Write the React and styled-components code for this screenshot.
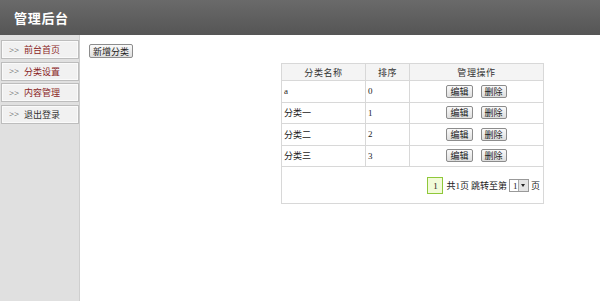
import React from "react";
import styled, { createGlobalStyle } from "styled-components";

const GlobalStyle = createGlobalStyle`
	html, body {
		margin: 0;
		padding: 0;
		background: #fff;
		font-family: "Liberation Serif", "Noto Sans CJK SC", sans-serif;
		font-size: 9px;
		color: #333;
	}
`;

const menu = [
	{ name: "前台首页", red: true },
	{ name: "分类设置", red: true },
	{ name: "内容管理", red: true },
	{ name: "退出登录", red: false },
];

const rows = [
	{ name: "a", sort: "0" },
	{ name: "分类一", sort: "1" },
	{ name: "分类二", sort: "2" },
	{ name: "分类三", sort: "3" },
];

function App() {
	return (
		<Page>
			<GlobalStyle />
			<Header>
				<h1>管理后台</h1>
			</Header>
			<Body>
				<Sidebar>
					{menu.map((m) => (
						<MenuItem key={m.name} $red={m.red}>
							<span className="arrow">&gt;&gt;</span>
							<span className="label">{m.name}</span>
						</MenuItem>
					))}
				</Sidebar>
				<Main>
					<Button>新增分类</Button>
					<Table>
						<thead>
							<tr>
								<th style={{ width: 83 }}>分类名称</th>
								<th style={{ width: 43 }}>排序</th>
								<th>管理操作</th>
							</tr>
						</thead>
						<tbody>
							{rows.map((r) => (
								<tr key={r.name}>
									<td>{r.name}</td>
									<td>{r.sort}</td>
									<td className="ops">
										<Button $small>编辑</Button>
										<Button $small>删除</Button>
									</td>
								</tr>
							))}
							<tr>
								<td colSpan={3} className="pager-cell">
									<Pager>
										<PageNum>1</PageNum>
										<span>共1页</span>
										<span>跳转至第</span>
										<Select>
											<span>1</span>
											<i />
										</Select>
										<span>页</span>
									</Pager>
								</td>
							</tr>
						</tbody>
					</Table>
				</Main>
			</Body>
		</Page>
	);
}

const Page = styled.div`
	width: 600px;
	height: 301px;
	display: flex;
	flex-direction: column;
	overflow: hidden;
`;

const Header = styled.header`
	height: 35px;
	flex-shrink: 0;
	background: linear-gradient(#6a6a6a, #555);
	display: flex;
	align-items: center;
	padding-left: 14px;

	h1 {
		margin: 0;
		font-family: "Noto Sans CJK SC", sans-serif;
		font-size: 13px;
		font-weight: bold;
		color: #fff;
		letter-spacing: 0.7px;
	}
`;

const Body = styled.div`
	flex: 1;
	display: flex;
`;

const Sidebar = styled.nav`
	width: 80px;
	background: #e0e0e0;
	border-right: 1px solid #cfcfcf;
	padding: 5px 0 0 1px;
	box-sizing: border-box;
	display: flex;
	flex-direction: column;
	gap: 2.5px;
`;

const MenuItem = styled.div`
	height: 19px;
	width: 78px;
	box-sizing: border-box;
	background: #f1f1f1;
	border: 1px solid #bdbdbd;
	box-shadow: inset 0 0 0 1px #fafafa;
	display: flex;
	align-items: center;
	padding-left: 7px;

	.arrow {
		color: #444;
		width: 15px;
	}
	.label {
		font-family: "Noto Sans CJK SC", sans-serif;
		color: ${(p) => (p.$red ? "#8a1f1f" : "#333")};
	}
`;

const Main = styled.main`
	flex: 1;
	padding: 9px 56px 0 9px;
	display: flex;
	flex-direction: column;
	align-items: flex-start;
`;

const Button = styled.button`
	font-family: "Noto Sans CJK SC", sans-serif;
	font-size: 9px;
	line-height: 11px;
	color: #222;
	padding: 0 3px;
	height: ${(p) => (p.$small ? "13px" : "14px")};
	background: linear-gradient(#fafafa, #dedede);
	border: 1px solid #8c8c8c;
	border-radius: 2px;
	margin: 0 ${(p) => (p.$small ? "4px" : "0")};
	cursor: pointer;
`;

const Table = styled.table`
	align-self: flex-end;
	margin-top: 5px;
	width: 263px;
	border-collapse: collapse;
	border: 1px solid #d8d8d8;
	font-size: 9px;

	th {
		height: 16px;
		background: #f4f4f4;
		font-family: "Noto Sans CJK SC", sans-serif;
		font-weight: normal;
		color: #333;
		border: 1px solid #d8d8d8;
		padding: 0;
		letter-spacing: 0.6px;
	}
	td {
		height: 20.5px;
		border: 1px solid #d8d8d8;
		padding: 0 2px;
		color: #222;
		font-family: "Liberation Serif", "Noto Sans CJK SC", serif;
	}
	td.ops {
		text-align: center;
	}
	td.pager-cell {
		height: 36px;
		padding: 0;
		vertical-align: bottom;
	}
`;

const Pager = styled.div`
	display: flex;
	justify-content: flex-end;
	align-items: center;
	gap: 2px;
	padding: 0 3px 9px 0;
	font-family: "Liberation Serif", "Noto Sans CJK SC", serif;
	color: #222;
`;

const PageNum = styled.span`
	width: 16px;
	height: 17px;
	box-sizing: border-box;
	border: 1px solid #8fc83a;
	background: #f2fbd9;
	display: flex;
	align-items: center;
	justify-content: center;
	margin-right: 1px;
`;

const Select = styled.span`
	height: 13px;
	width: 20px;
	box-sizing: border-box;
	border: 1px solid #999;
	background: #fff;
	display: flex;
	align-items: center;
	justify-content: space-between;
	padding-left: 3px;

	i {
		width: 9px;
		height: 11px;
		background: #e4e4e4;
		border-left: 1px solid #aaa;
		position: relative;
		&::after {
			content: "";
			position: absolute;
			left: 2px;
			top: 4px;
			border-left: 2.5px solid transparent;
			border-right: 2.5px solid transparent;
			border-top: 3px solid #222;
		}
	}
`;

export default App;
